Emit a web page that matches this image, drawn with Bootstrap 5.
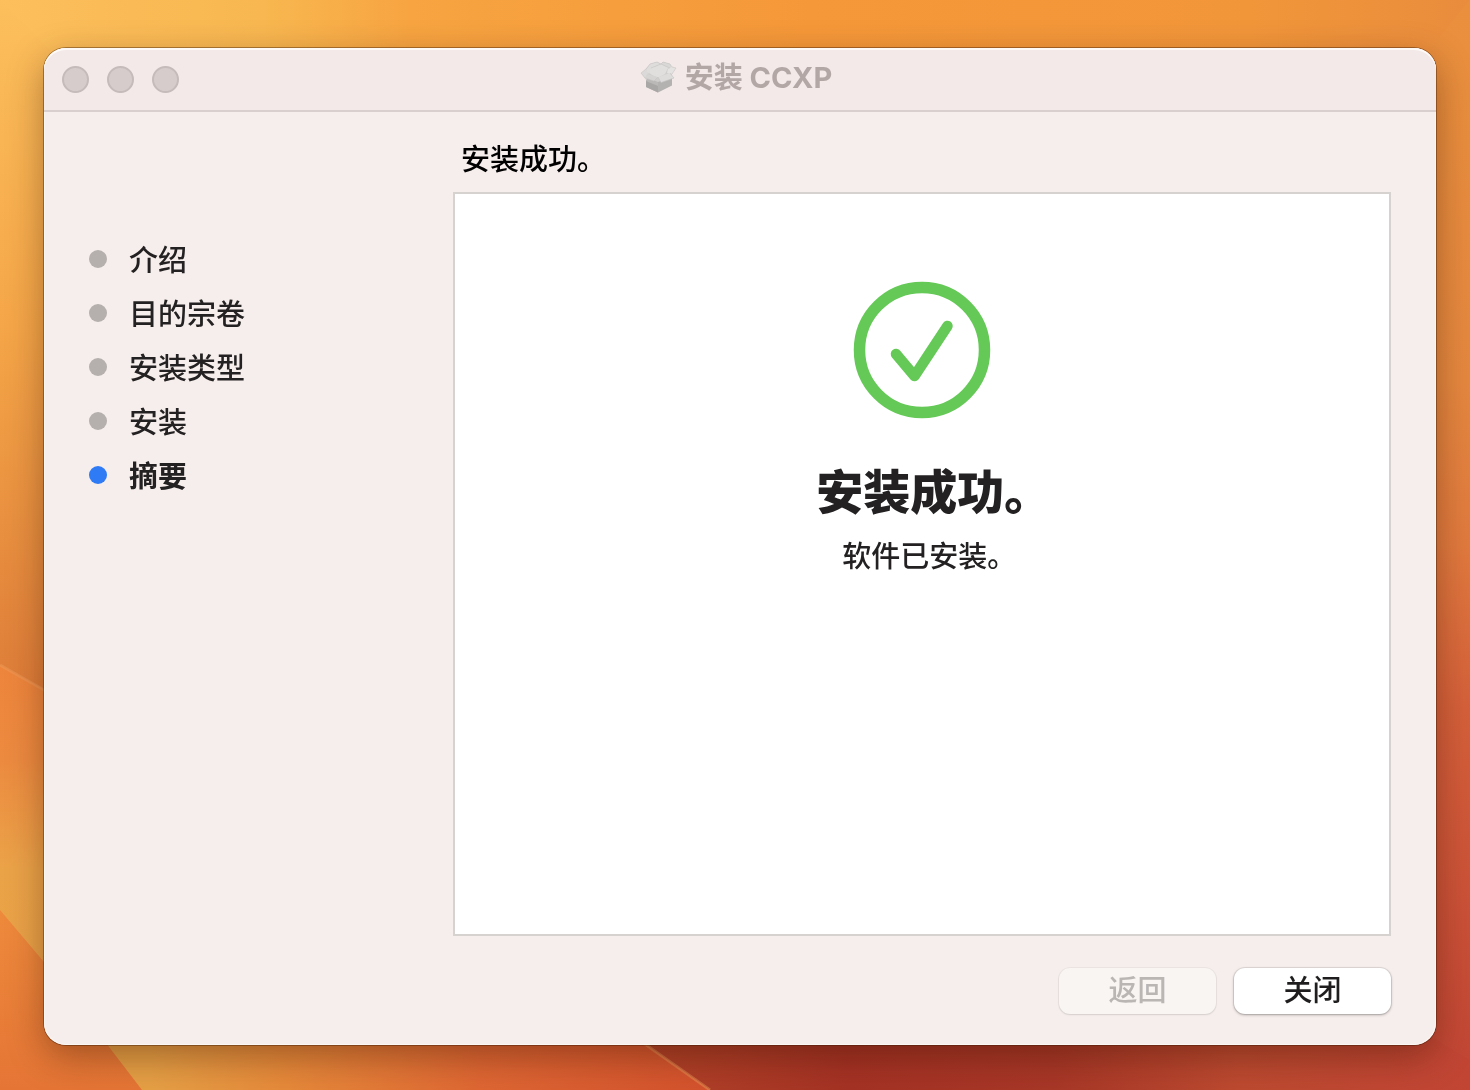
<!DOCTYPE html>
<html lang="zh-CN">
<head>
<meta charset="utf-8">
<meta name="viewport" content="width=device-width, initial-scale=1">
<title>安装 CCXP</title>
<link href="https://cdn.jsdelivr.net/npm/bootstrap@5.3.0/dist/css/bootstrap.min.css" rel="stylesheet">
<style>
  body {
    font-family: Inter, "Noto Sans CJK SC", sans-serif;
    font-size: 29px;
    font-weight: 500;
    line-height: 40px;
    color: #232121;
    background: #e8893a;
  }
  .wallpaper { z-index: -1; }
  .desktop { padding: 48px 34px 45px 44px; }
  .installer {
    background: #f6eeec;
    border-radius: 22px;
    box-shadow: 0 0 0 1px rgba(60, 25, 0, .4), 0 12px 36px rgba(50, 15, 0, .38), inset 0 0 0 1px #fbf7f4;
  }
  .titlebar {
    height: 64px;
    padding: 0 18px;
    background: #f2e9e8;
    border-bottom: 2px solid #d9cfce;
    border-radius: 22px 22px 0 0;
    box-shadow: inset 0 2px 0 #fdfaf8;
  }
  .lights { gap: 18px; }
  .light {
    width: 27px;
    height: 27px;
    padding: 0;
    border: 2px solid #c5bbba;
    border-radius: 50%;
    background: #d6cccb;
  }
  .caption { gap: 7px; padding: 0 8px 2px 0; font-size: 29px; font-weight: 700; line-height: 40px; color: #b3a7a6; }
  .steps { width: 409px; padding: 120px 0 0 45px; }
  .step { height: 54px; gap: 22px; }
  .step-name { padding-top: 3px; }
  .bullet { width: 18px; height: 18px; border-radius: 50%; background: #b5afad; }
  .step.current { font-weight: 700; }
  .step.current .bullet { background: #2f7af5; }
  .content { padding: 28px 45px 31px 0; }
  .status { margin: 0 0 12px 8px; font-size: 29px; font-weight: 500; line-height: 40px; color: #000; }
  .panel { border: 2px solid #d6d2d0; padding-top: 87px; }
  .done { font-size: 47px; line-height: 64px; font-weight: 900; margin: 41px 0 13px; font-feature-settings: "halt"; }
  .note { font-feature-settings: "halt"; }
  .actions { gap: 18px; margin-top: 32px; }
  .push {
    --bs-btn-bg: #fff;
    --bs-btn-color: #1f1d1d;
    --bs-btn-hover-bg: #fafafa;
    --bs-btn-disabled-bg: #f8f5f3;
    --bs-btn-disabled-color: #b9b6b4;
    --bs-btn-disabled-opacity: 1;
    --bs-btn-font-size: 29px;
    --bs-btn-font-weight: 500;
    --bs-btn-line-height: 46px;
    --bs-btn-border-width: 0;
    --bs-btn-border-radius: 11px;
    --bs-btn-padding-y: 0;
    width: 157px;
    height: 46px;
    box-shadow: 0 0 0 1px rgba(0, 0, 0, .08), 0 1px 3px rgba(0, 0, 0, .3);
  }
  .push:disabled { box-shadow: 0 0 0 1px rgba(0, 0, 0, .04), 0 1px 2px rgba(0, 0, 0, .1); }
</style>
</head>
<body>
<svg class="wallpaper position-fixed top-0 start-0 w-100 h-100" viewBox="0 0 1470 1090" preserveAspectRatio="none" aria-hidden="true">
  <defs>
    <linearGradient id="top" x1="0" x2="1" y1="0" y2="0">
      <stop offset="0" stop-color="#fcbf5c"/><stop offset=".18" stop-color="#f8b750"/><stop offset=".28" stop-color="#f7a441"/>
      <stop offset=".55" stop-color="#f59839"/><stop offset=".85" stop-color="#f2963a"/><stop offset="1" stop-color="#e98d3d"/>
    </linearGradient>
    <linearGradient id="left" x1="0" x2="0" y1="0" y2="1">
      <stop offset="0" stop-color="#fcbf5c"/><stop offset=".3" stop-color="#f5a648"/><stop offset=".65" stop-color="#dd7b38"/><stop offset="1" stop-color="#d87536"/>
    </linearGradient>
    <linearGradient id="band" x1="0" x2="0" y1="665" y2="1090" gradientUnits="userSpaceOnUse">
      <stop offset="0" stop-color="#ee853c"/><stop offset=".22" stop-color="#ec8a40"/><stop offset=".48" stop-color="#eba348"/><stop offset="1" stop-color="#e8a047"/>
    </linearGradient>
    <linearGradient id="bandEast" x1="150" x2="700" y1="0" y2="0" gradientUnits="userSpaceOnUse">
      <stop offset="0" stop-color="#e6a045"/><stop offset=".25" stop-color="#e6893a"/><stop offset=".6" stop-color="#df6733"/><stop offset="1" stop-color="#d4532d"/>
    </linearGradient>
    <linearGradient id="corner" x1="0" x2="0" y1="910" y2="1090" gradientUnits="userSpaceOnUse">
      <stop offset="0" stop-color="#ee8a3c"/><stop offset="1" stop-color="#e57535"/>
    </linearGradient>
    <linearGradient id="right" x1="0" x2="0" y1="0" y2="1">
      <stop offset="0" stop-color="#ea903d"/><stop offset=".35" stop-color="#e5883f"/><stop offset=".5" stop-color="#e17a3e"/>
      <stop offset=".65" stop-color="#d5603a"/><stop offset=".85" stop-color="#ca5037"/><stop offset="1" stop-color="#c14534"/>
    </linearGradient>
    <linearGradient id="red" x1="640" x2="1470" y1="0" y2="0" gradientUnits="userSpaceOnUse">
      <stop offset="0" stop-color="#b34328"/><stop offset=".25" stop-color="#a53224"/><stop offset=".5" stop-color="#a83727"/>
      <stop offset=".72" stop-color="#bd4a30"/><stop offset="1" stop-color="#c24534"/>
    </linearGradient>
  </defs>
  <rect width="1470" height="1090" fill="url(#top)"/>
  <path d="M0 0 60 60V1090H0Z" fill="url(#left)"/>
  <path d="M0 665 60 698V1090H0Z" fill="url(#band)"/>
  <path d="M1470 0 1420 60V1060L1470 1090Z" fill="url(#right)"/>
  <path d="M60 1030H625L710 1090H60Z" fill="url(#bandEast)"/>
  <path d="M0 910 44 962 142 1090H0Z" fill="url(#corner)"/>
  <path d="M625 1030H1420L1470 1060V1090H710Z" fill="url(#red)"/>
  <path d="M0 665 60 699M625 1030 710 1090" fill="none" stroke="#f0a060" stroke-opacity=".4" stroke-width="3"/>
</svg>

<div class="desktop d-flex min-vh-100">
  <main class="installer d-flex flex-column flex-grow-1">
    <header class="titlebar d-flex align-items-center">
      <div class="lights d-flex flex-fill w-25">
        <button class="light" type="button" aria-label="关闭窗口"></button>
        <button class="light" type="button" aria-label="最小化"></button>
        <button class="light" type="button" aria-label="缩放"></button>
      </div>
      <h1 class="caption d-flex align-items-center m-0">
        <svg width="38" height="36" viewBox="0 0 38 36" aria-hidden="true">
          <path d="M6 15 18 20V32.500L6 27Z" fill="#bbb9b8"/>
          <path d="M18 20 32 15V25.500L18 32.500Z" fill="#b4b2b1"/>
          <path d="M6 21 18 26V32.500L6 27Z" fill="#a9a7a6"/>
          <path d="M6 9 10 4 17 2 21 4 23 2 30 4 32 8V17L18 22 6 17Z" fill="#cfcecd"/>
          <path d="M6 10 10 4 17 2 21 4 12 8 8 14Z" fill="#dedddc"/>
          <path d="M21 4 23 2 30 4 32 9 27 8Z" fill="#d9d8d7"/>
          <path d="M11 8 21 4 28 8 25 14 17 18 9 13Z" fill="#e0dfde"/>
          <path d="M6 9 1 13 6 20 9 17Z" fill="#dbdad9"/>
          <path d="M7 14 18 17 14 21 5 18Z" fill="#d5d4d3"/>
          <path d="M18 17 30 13 34 18 21 22.500Z" fill="#dddcdb"/>
          <path d="M28 9 32 7 36 8 32 14 27 13Z" fill="#e4e3e2"/>
          <path d="M6 9 1 13 5 18 14 21 18 17 21 22.500 34 18 30 13M32 7 36 8 32 14M6 9 10 4 17 2 21 4 23 2 30 4 32 7M21 4 11 8M21 4 30 8" fill="none" stroke="#c6c4c3" stroke-width=".6"/>
        </svg>
        <span>安装 CCXP</span>
      </h1>
      <div class="flex-fill w-25"></div>
    </header>

    <div class="d-flex flex-grow-1">
      <ol class="steps list-unstyled flex-shrink-0 m-0">
        <li class="step d-flex align-items-center"><span class="bullet"></span><span class="step-name">介绍</span></li>
        <li class="step d-flex align-items-center"><span class="bullet"></span><span class="step-name">目的宗卷</span></li>
        <li class="step d-flex align-items-center"><span class="bullet"></span><span class="step-name">安装类型</span></li>
        <li class="step d-flex align-items-center"><span class="bullet"></span><span class="step-name">安装</span></li>
        <li class="step current d-flex align-items-center" aria-current="step"><span class="bullet"></span><span class="step-name">摘要</span></li>
      </ol>

      <section class="content d-flex flex-column flex-grow-1">
        <h2 class="status">安装成功。</h2>
        <div class="panel bg-white flex-grow-1 d-flex flex-column align-items-center">
          <svg width="138" height="138" viewBox="0 0 138 138" fill="none" stroke="#65c957" aria-hidden="true">
            <circle cx="69" cy="69" r="62.500" stroke-width="11.500"/>
            <path d="M43 73 61.500 95 94.500 45" stroke-width="10.500" stroke-linecap="round" stroke-linejoin="round"/>
          </svg>
          <h3 class="done">安装成功。</h3>
          <p class="note m-0">软件已安装。</p>
        </div>
        <div class="actions d-flex justify-content-end">
          <button class="push btn" type="button" disabled>返回</button>
          <button class="push btn" type="button">关闭</button>
        </div>
      </section>
    </div>
  </main>
</div>
<script src="https://cdn.jsdelivr.net/npm/bootstrap@5.3.0/dist/js/bootstrap.bundle.min.js"></script>
</body>
</html>
